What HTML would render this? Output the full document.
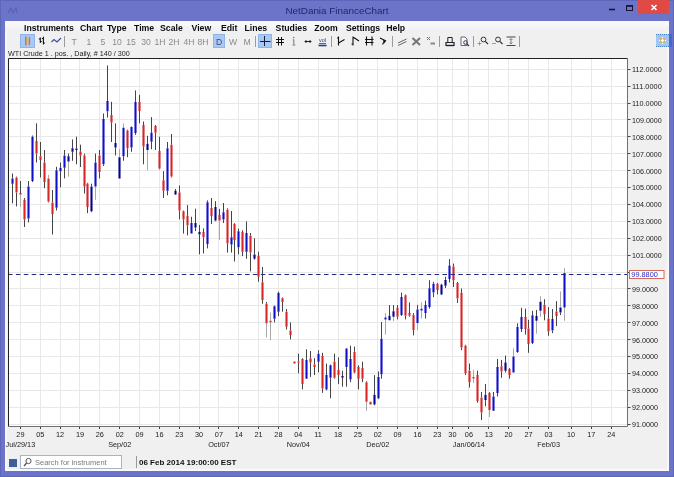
<!DOCTYPE html>
<html><head><meta charset="utf-8"><title>NetDania FinanceChart</title>
<style>
html,body{margin:0;padding:0}
body{width:674px;height:477px;position:relative;overflow:hidden;background:#6b74c8;font-family:"Liberation Sans",sans-serif;color:#111}
.abs{position:absolute}
#title,#menu,#lbl,#stxt,#time,.tb,svg{will-change:transform}
#content{left:5px;top:21px;width:664px;height:450px;background:#f0f0f0;box-sizing:border-box;border:2px solid #f9f9fc;border-top:none}
#title{left:0;top:4px;width:674px;text-align:center;font-size:9.9px;color:#20286e;line-height:14px}
#menu{left:24px;top:22.5px;height:11px;font-weight:bold;font-size:8.7px;line-height:11px;white-space:nowrap;color:#0a0a0a}
#menu span{position:absolute;top:0}
.tb{position:absolute;top:37px;font-size:8.6px;line-height:10px;color:#8a8a8a;width:16px;text-align:center}
.sep{position:absolute;top:36px;width:1px;height:11px;background:#9a9a9a}
.sel{position:absolute;top:34px;height:14px;background:#a9c9f4;border:1px solid #8fb4ea;box-sizing:border-box}
#lbl{left:8px;top:49px;font-size:7.2px;line-height:9px;white-space:nowrap;color:#222}
#search{left:20px;top:455px;width:102px;height:14px;box-sizing:border-box;border:1px solid #a8b4c8;background:#fff}
#stxt{left:35px;top:458px;font-size:7.5px;line-height:9px;color:#7a7a7a;white-space:nowrap}
#time{left:139px;top:458px;font-size:8px;font-weight:bold;line-height:9px;white-space:nowrap;color:#111}
</style></head><body>
<div class="abs" style="left:0;top:0;width:674px;height:477px;box-sizing:border-box;border:1px solid #5d66ba"></div>
<div class="abs" id="content"></div>
<div class="abs" style="left:5px;top:21px;width:664px;height:10px;background:linear-gradient(#fbfbfb,#f0f0f0)"></div>
<div class="abs" id="title">NetDania FinanceChart</div>
<!-- window buttons -->
<div class="abs" style="left:638px;top:0;width:31px;height:14px;background:#e04a44"></div>
<svg class="abs" style="left:0;top:0" width="674" height="21" viewBox="0 0 674 21">
<path d="M651.5 5l5 5M656.5 5l-5 5" stroke="#fff" stroke-width="1.6" fill="none"/>
<path d="M609 9.5h6" stroke="#15153a" stroke-width="1.6"/>
<rect x="626.5" y="5.5" width="6" height="5" fill="none" stroke="#15153a" stroke-width="1"/><path d="M626 6h7" stroke="#15153a" stroke-width="1.6"/>
<path d="M8 13l3-5l2 5l3-5l1 5" stroke="#5660b4" stroke-width="1.1" fill="none"/>
</svg>
<div class="abs" id="menu"><span style="left:0px;word-spacing:0px">Instruments</span><span style="left:56px;word-spacing:1.8px">Chart Type</span><span style="left:110px;word-spacing:3.5px">Time Scale</span><span style="left:167.5px;word-spacing:0px">View</span><span style="left:197px;word-spacing:0px">Edit</span><span style="left:220.5px;word-spacing:0px">Lines</span><span style="left:251.60000000000002px;word-spacing:0px">Studies</span><span style="left:290.2px;word-spacing:0px">Zoom</span><span style="left:321.9px;word-spacing:0px">Settings</span><span style="left:362.3px;word-spacing:0px">Help</span></div>
<div class="abs" style="left:656px;top:34px;width:12.5px;height:13px;background:#9fc6f5;box-sizing:border-box;border-top:1px dotted #4a86c4;border-bottom:1px dotted #4a86c4"></div><div class="abs" style="left:668.5px;top:34px;width:3.5px;height:13px;background:#4a66cc"></div>
<div class="sel" style="left:20px;width:15px"></div>
<div class="sel" style="left:213px;width:12px"></div>
<div class="sel" style="left:258px;width:14px"></div>
<div class="tb" style="left:66.4px;color:#8a8a8a">T</div>
<div class="tb" style="left:80.7px;color:#8a8a8a">1</div>
<div class="tb" style="left:94.6px;color:#8a8a8a">5</div>
<div class="tb" style="left:109.0px;color:#8a8a8a">10</div>
<div class="tb" style="left:123.0px;color:#8a8a8a">15</div>
<div class="tb" style="left:137.6px;color:#8a8a8a">30</div>
<div class="tb" style="left:152.0px;color:#8a8a8a">1H</div>
<div class="tb" style="left:166.0px;color:#8a8a8a">2H</div>
<div class="tb" style="left:180.5px;color:#8a8a8a">4H</div>
<div class="tb" style="left:195.0px;color:#8a8a8a">8H</div>
<div class="tb" style="left:211.0px;color:#3a4a7a">D</div>
<div class="tb" style="left:224.5px;color:#8a8a8a">W</div>
<div class="tb" style="left:238.5px;color:#8a8a8a">M</div>
<div class="sep" style="left:64.0px"></div>
<div class="sep" style="left:255.0px"></div>
<div class="sep" style="left:331.0px"></div>
<div class="sep" style="left:391.8px"></div>
<div class="sep" style="left:439.0px"></div>
<div class="sep" style="left:472.9px"></div>
<div class="sep" style="left:519.2px"></div>
<svg class="abs" style="left:0;top:32px" width="674" height="18" viewBox="0 32 674 18" fill="none"><path d="M25 37h1.6v8h-1.6zM28.6 37.8h1.6v6.8h-1.6z" fill="#e08a30"/><path d="M25.8 36v10M29.4 36.5v9" stroke="#b06020" stroke-width=".5"/><path d="M40.3 37.5v5.5M38.8 39h1.5M40.3 41.5h1.5M43.4 36.8v7.8M41.9 38.5h1.5M43.4 43h1.5" stroke="#111" stroke-width="1.1"/><path d="M51.5 42l2.5-2.5l3 2.5l4-4" stroke="#3450a0" stroke-width="1.1"/><path d="M264.5 36v10M260 41.5h10.5" stroke="#0f2040" stroke-width="1"/><path d="M278.5 37v8.5M281.5 37v8.5M276 39.5h8M276 42.5h8" stroke="#111" stroke-width="1"/><path d="M293.8 39.5v5M292.5 45h2.8M292.8 39.8h1" stroke="#777" stroke-width="1"/><circle cx="293.8" cy="37.5" r=".8" fill="#777"/><path d="M305 41.5h6M306.5 40l-1.5 1.5l1.5 1.5M309.5 40l1.5 1.5l-1.5 1.5" stroke="#222" stroke-width="1"/><path d="M318.5 45.5h8" stroke="#2a3a90" stroke-width="1.6"/><path d="M319 43.5h7" stroke="#5060b0" stroke-width="1"/><text x="322.5" y="41.5" font-size="5.5" font-family="Liberation Sans, sans-serif" fill="#2a3a90" text-anchor="middle">vol</text><path d="M338.5 36.5v9M338.5 43l6-3.5M337 38h1.5" stroke="#111" stroke-width="1.1"/><path d="M353 36.5v9M353 37l6 4M351.5 44h1.5" stroke="#111" stroke-width="1.1"/><path d="M366.5 36.5v9M372 36.5v9M365 39.5h8.5M365 42.5h8.5" stroke="#111" stroke-width="1.1"/><path d="M380 38l5 2.5l-2.5 4" stroke="#111" stroke-width="1.1"/><path d="M383 40l3.5 .5l-2.5 3z" fill="#111"/><path d="M398 43l8.5-4M398 45.5l8.5-4" stroke="#666" stroke-width="1"/><path d="M412.5 38l7.5 7M420 38l-7.5 7" stroke="#777" stroke-width="2"/><path d="M427 37l3 3M430 37l-3 3" stroke="#777" stroke-width="1"/><path d="M430.5 43.5h4.5" stroke="#888" stroke-width="2"/><path d="M446 42.5h8v3h-8z" stroke="#223" stroke-width="1.2"/><path d="M447.8 42v-4.5h4.4V42" stroke="#223" stroke-width="1"/><path d="M446 45.5h8" stroke="#223" stroke-width="1.4"/><path d="M461 37h4l2 2v6.5h-6z" stroke="#667" stroke-width="1" fill="#fafafa"/><circle cx="465.5" cy="42.5" r="1.8" stroke="#334" stroke-width="1"/><path d="M467 44l2 2" stroke="#334" stroke-width="1.1"/><circle cx="483.5" cy="39.5" r="2.4" stroke="#333" stroke-width="1"/><path d="M485.3 41.3l2.7 2.7" stroke="#333" stroke-width="1.2"/><path d="M477.5 43.5h4M479.5 41.5v4" stroke="#d07878" stroke-width=".9"/><circle cx="498" cy="39.5" r="2.4" stroke="#333" stroke-width="1"/><path d="M499.8 41.3l2.7 2.7" stroke="#333" stroke-width="1.2"/><path d="M492 43.5h4" stroke="#d07878" stroke-width=".9"/><path d="M506.5 37h9M506.5 45.5h9" stroke="#444" stroke-width="1.2"/><path d="M511 39v4.5M509.5 40l1.5-1.5l1.5 1.5M509.5 42.5l1.5 1.5l1.5-1.5" stroke="#666" stroke-width=".8"/><path d="M662.5 37v7M659 40.5h7" stroke="#fff" stroke-width="1.2"/><rect x="660.5" y="38.5" width="4" height="4" stroke="#c8b070" stroke-width=".8"/></svg>
<div class="abs" id="lbl">WTI Crude 1 . pos. , Daily, # 140 / 300</div>
<svg width="674" height="477" viewBox="0 0 674 477" style="position:absolute;left:0;top:0" font-family="Liberation Sans, sans-serif">
<rect x="8" y="58" width="619" height="368" fill="#ffffff"/>
<path d="M20.5 58V426M40.5 58V426M60.5 58V426M79.5 58V426M99.5 58V426M119.5 58V426M139.5 58V426M159.5 58V426M179.5 58V426M199.5 58V426M218.5 58V426M238.5 58V426M258.5 58V426M278.5 58V426M298.5 58V426M318.5 58V426M338.5 58V426M357.5 58V426M377.5 58V426M397.5 58V426M417.5 58V426M437.5 58V426M452.5 58V426M468.5 58V426M488.5 58V426M508.5 58V426M528.5 58V426M548.5 58V426M571.5 58V426M591.5 58V426M611.5 58V426M8 424.5H627M8 407.5H627M8 390.5H627M8 373.5H627M8 356.5H627M8 339.5H627M8 322.5H627M8 305.5H627M8 288.5H627M8 272.5H627M8 255.5H627M8 238.5H627M8 221.5H627M8 204.5H627M8 187.5H627M8 170.5H627M8 153.5H627M8 136.5H627M8 119.5H627M8 103.5H627M8 86.5H627M8 69.5H627" stroke="#e8e8e8" stroke-width="1" fill="none"/>
<path d="M12.50 173.5V178.4M12.50 183.7V203.3M16.50 176.6V177.5M16.50 192.6V206.4M20.50 181.0V193.0M24.50 198.0V199.8M24.50 219.4V227.0M28.50 181.0V186.4M28.50 218.5V222.4M32.50 135.5V136.7M32.50 181.0V182.0M36.50 123.3V141.1M36.50 153.6V162.5M40.50 142.0V156.3M40.50 159.9V177.5M44.50 150.0V162.5M44.50 182.0V188.2M48.50 201.5V202.4M52.50 190.0V202.4M52.50 214.0V234.5M56.50 166.8V170.3M56.50 207.8V210.5M60.50 162.5V167.7M60.50 171.2V187.3M64.50 150.0V155.4M64.50 167.7V178.4M68.50 153.6V156.3M72.50 139.4V148.3M72.50 151.8V160.8M76.50 136.7V148.5M76.50 150.0V164.3M80.50 144.7V151.8M80.50 155.4V167.0M84.50 153.6V155.4M84.50 186.4V193.5M87.50 182.8V183.7M87.50 206.9V213.1M91.50 183.7V186.4M91.50 211.3V212.2M95.50 153.6V162.5M99.50 150.0V155.4M99.50 172.1V178.4M103.50 113.5V118.9M103.50 164.3V166.0M107.50 65.4V101.0M107.50 111.3V117.5M111.50 101.8V115.0M111.50 122.4V142.0M115.50 123.3V142.9M115.50 147.4V155.4M119.50 178.4V178.4M123.50 156.3V160.8M127.50 129.6V130.5M127.50 148.3V157.2M131.50 126.4V126.9M131.50 147.4V151.8M135.50 90.4V102.0M135.50 133.1V134.9M139.50 94.8V102.0M139.50 110.9V123.3M143.50 121.5V125.1M143.50 146.5V164.3M147.50 135.8V143.8M151.50 117.1V132.8M151.50 141.7V149.2M155.50 125.1V126.0M155.50 132.8V150.0M159.50 136.7V151.0M159.50 168.6V169.5M163.50 171.2V180.2M163.50 190.8V198.0M167.50 142.0V148.3M167.50 190.8V195.3M171.50 134.0V144.7M171.50 176.6V177.5M175.50 189.0V190.8M175.50 194.4V195.0M179.50 185.5V192.6M179.50 210.5V219.4M183.50 210.5V211.3M183.50 219.4V233.6M187.50 205.1V215.8M187.50 225.6V235.4M191.50 216.7V222.9M191.50 233.6V233.6M195.50 208.7V222.9M195.50 227.4V231.0M199.50 225.0V232.0M199.50 234.6V254.4M203.50 228.4V232.0M203.50 237.3V253.5M207.50 200.4V202.2M207.50 244.0V248.4M211.50 198.0V207.9M211.50 215.9V224.0M215.50 201.2V207.0M215.50 220.4V221.3M219.50 208.8V215.0M223.50 203.0V212.3M223.50 219.5V223.0M227.50 208.3V209.7M227.50 243.5V252.6M231.50 211.0V237.3M231.50 244.4V252.6M234.50 223.2V224.0M234.50 240.0V261.5M238.50 228.5V231.2M238.50 247.2V254.4M242.50 230.3V232.1M242.50 251.7V256.1M246.50 221.4V233.0M246.50 251.7V258.8M250.50 233.0V235.7M250.50 252.6V271.4M254.50 238.3V254.4M254.50 258.8V259.7M258.50 251.7V256.1M258.50 276.7V281.7M262.50 267.0V282.2M262.50 300.1V303.7M266.50 301.9V303.7M274.50 305.5V306.3M274.50 318.8V322.4M278.50 291.7V293.0M278.50 311.7V316.1M282.50 297.4V298.3M282.50 301.9V311.7M286.50 309.0V311.7M286.50 326.8V329.5M290.50 322.4V330.4M290.50 334.9V339.4M294.50 361.4V361.4M294.50 363.5V363.5M298.50 353.7V361.5M298.50 362.8V373.3M302.50 358.2V359.0M302.50 384.0V389.4M306.50 349.3V360.0M306.50 378.7V378.7M310.50 351.0V358.2M310.50 362.6V376.9M314.50 358.2V364.4M314.50 367.1V375.1M318.50 350.2V353.7M318.50 361.7V372.4M322.50 352.8V356.0M322.50 388.5V392.9M326.50 363.5V375.1M326.50 389.4V390.3M330.50 364.5V365.3M330.50 377.8V398.3M334.50 353.7V361.7M334.50 377.8V378.7M338.50 357.3V369.8M338.50 375.1V384.0M342.50 370.7V376.0M342.50 377.8V386.7M346.50 348.0V348.4M346.50 367.1V386.7M350.50 345.7V359.0M350.50 379.6V382.2M354.50 346.6V351.9M354.50 372.4V373.3M358.50 365.3V367.1M358.50 378.7V389.4M362.50 361.7V368.0M362.50 378.7V382.2M366.50 381.3V382.2M370.50 401.8V401.8M370.50 404.5V404.5M374.50 375.1V394.7M374.50 404.5V405.4M378.50 371.5V376.9M378.50 398.3V399.2M381.50 322.0V338.8M381.50 374.2V378.7M389.50 305.1V315.8M389.50 320.3V320.3M393.50 305.1V311.3M397.50 305.1V307.8M397.50 316.7V319.4M401.50 292.6V297.1M401.50 314.9V315.8M405.50 294.4V295.3M405.50 315.8V319.4M409.50 302.4V313.1M409.50 315.8V316.7M413.50 313.1V314.9M413.50 330.1V335.4M417.50 305.1V309.6M425.50 300.7V305.1M425.50 313.1V318.5M429.50 280.2V288.2M429.50 306.9V308.7M433.50 281.9V283.7M433.50 292.6V297.1M437.50 282.8V283.7M437.50 290.0V294.4M441.50 283.7V284.8M441.50 294.6V295.0M445.50 276.8V279.9M445.50 285.7V288.0M449.50 259.1V265.6M449.50 279.0V282.5M453.50 263.6V266.5M453.50 280.3V287.0M457.50 282.0V283.0M457.50 298.6V303.0M461.50 288.5V292.8M461.50 347.5V350.2M465.50 344.8V345.7M465.50 373.3V375.1M469.50 363.5V370.7M469.50 382.2V387.6M477.50 370.7V375.1M477.50 401.0V402.7M481.50 392.0V397.4M481.50 412.5V420.0M485.50 384.0V394.7M485.50 400.1V406.3M489.50 392.0V392.9M493.50 392.0V396.5M493.50 410.8V411.0M497.50 359.0V367.1M497.50 392.9V396.5M501.50 360.0V366.2M501.50 371.5V377.8M505.50 355.5V362.6M505.50 370.7V372.4M509.50 368.0V368.9M509.50 375.1V378.7M513.50 372.4V372.4M517.50 323.3V326.9M517.50 351.9V352.8M521.50 307.8V317.0M521.50 329.0V332.0M525.50 308.6V317.0M525.50 329.0V334.6M528.50 319.8V328.5M528.50 343.9V352.8M532.50 310.8V315.2M532.50 343.0V344.0M536.50 310.0V316.0M544.50 299.2V304.8M544.50 314.2V320.3M548.50 307.0V318.5M548.50 331.5V335.8M552.50 309.0V319.0M552.50 330.6V333.2M556.50 301.1V311.6M556.50 316.0V326.0M560.50 312.5V315.0" stroke="#454545" stroke-width="1" fill="none"/>
<path d="M20.50 194.5V207.0M48.50 174.8V178.4M68.50 161.6V176.6M95.50 186.4V199.8M119.50 149.2V157.2M123.50 123.3V127.8M147.50 150.0V170.3M219.50 220.4V240.0M266.50 323.3V337.5M270.50 312.6V320.8M270.50 322.2V340.2M366.50 401.8V410.8M385.50 313.1V317.6M385.50 319.4V334.5M393.50 316.7V321.1M417.50 322.9V330.1M421.50 302.4V308.7M421.50 310.5V318.5M473.50 369.8V377.0M473.50 378.5V383.1M489.50 409.9V417.0M513.50 348.4V356.4M536.50 320.7V333.7M540.50 296.2V301.8M540.50 310.8V316.9M560.50 291.5V307.4M564.50 268.0V273.1M564.50 307.4V320.8" stroke="#a8a8a8" stroke-width="1" fill="none"/>
<path d="M15.45 177.5h2.1V192.6h-2.1zM19.45 193.0h2.1V194.5h-2.1zM23.45 199.8h2.1V219.4h-2.1zM35.45 141.1h2.1V153.6h-2.1zM39.45 156.3h2.1V159.9h-2.1zM43.45 162.5h2.1V182.0h-2.1zM47.45 178.4h2.1V201.5h-2.1zM51.45 202.4h2.1V214.0h-2.1zM79.45 151.8h2.1V155.4h-2.1zM83.45 155.4h2.1V186.4h-2.1zM86.45 183.7h2.1V206.9h-2.1zM98.45 155.4h2.1V172.1h-2.1zM110.45 115.0h2.1V122.4h-2.1zM126.45 130.5h2.1V148.3h-2.1zM138.45 102.0h2.1V110.9h-2.1zM142.45 125.1h2.1V146.5h-2.1zM154.45 126.0h2.1V132.8h-2.1zM158.45 151.0h2.1V168.6h-2.1zM162.45 180.2h2.1V190.8h-2.1zM170.45 144.7h2.1V176.6h-2.1zM178.45 192.6h2.1V210.5h-2.1zM182.45 211.3h2.1V219.4h-2.1zM186.45 215.8h2.1V225.6h-2.1zM202.45 232.0h2.1V237.3h-2.1zM210.45 207.9h2.1V215.9h-2.1zM218.45 215.0h2.1V220.4h-2.1zM226.45 209.7h2.1V243.5h-2.1zM233.45 224.0h2.1V240.0h-2.1zM241.45 232.1h2.1V251.7h-2.1zM249.45 235.7h2.1V252.6h-2.1zM257.45 256.1h2.1V276.7h-2.1zM261.45 282.2h2.1V300.1h-2.1zM265.45 303.7h2.1V323.3h-2.1zM269.45 320.8h2.1V322.2h-2.1zM281.45 298.3h2.1V301.9h-2.1zM285.45 311.7h2.1V326.8h-2.1zM289.45 330.4h2.1V334.9h-2.1zM293.45 361.4h2.1V363.5h-2.1zM297.45 361.5h2.1V362.8h-2.1zM301.45 359.0h2.1V384.0h-2.1zM309.45 358.2h2.1V362.6h-2.1zM313.45 364.4h2.1V367.1h-2.1zM321.45 356.0h2.1V388.5h-2.1zM333.45 361.7h2.1V377.8h-2.1zM337.45 369.8h2.1V375.1h-2.1zM353.45 351.9h2.1V372.4h-2.1zM357.45 367.1h2.1V378.7h-2.1zM361.45 368.0h2.1V378.7h-2.1zM365.45 382.2h2.1V401.8h-2.1zM369.45 401.8h2.1V404.5h-2.1zM396.45 307.8h2.1V316.7h-2.1zM404.45 295.3h2.1V315.8h-2.1zM408.45 313.1h2.1V315.8h-2.1zM412.45 314.9h2.1V330.1h-2.1zM436.45 283.7h2.1V290.0h-2.1zM452.45 266.5h2.1V280.3h-2.1zM456.45 283.0h2.1V298.6h-2.1zM460.45 292.8h2.1V347.5h-2.1zM464.45 345.7h2.1V373.3h-2.1zM468.45 370.7h2.1V382.2h-2.1zM472.45 377.0h2.1V378.5h-2.1zM476.45 375.1h2.1V401.0h-2.1zM480.45 397.4h2.1V412.5h-2.1zM488.45 392.9h2.1V409.9h-2.1zM500.45 366.2h2.1V371.5h-2.1zM508.45 368.9h2.1V375.1h-2.1zM524.45 317.0h2.1V329.0h-2.1zM527.45 328.5h2.1V343.9h-2.1zM543.45 304.8h2.1V314.2h-2.1zM547.45 318.5h2.1V331.5h-2.1zM555.45 311.6h2.1V316.0h-2.1z" fill="#d62626"/>
<path d="M11.45 178.4h2.1V183.7h-2.1zM27.45 186.4h2.1V218.5h-2.1zM31.45 136.7h2.1V181.0h-2.1zM55.45 170.3h2.1V207.8h-2.1zM59.45 167.7h2.1V171.2h-2.1zM63.45 155.4h2.1V167.7h-2.1zM94.45 162.5h2.1V186.4h-2.1zM102.45 118.9h2.1V164.3h-2.1zM106.45 101.0h2.1V111.3h-2.1zM122.45 127.8h2.1V156.3h-2.1zM130.45 126.9h2.1V147.4h-2.1zM134.45 102.0h2.1V133.1h-2.1zM150.45 132.8h2.1V141.7h-2.1zM166.45 148.3h2.1V190.8h-2.1zM190.45 222.9h2.1V233.6h-2.1zM206.45 202.2h2.1V244.0h-2.1zM222.45 212.3h2.1V219.5h-2.1zM230.45 237.3h2.1V244.4h-2.1zM237.45 231.2h2.1V247.2h-2.1zM245.45 233.0h2.1V251.7h-2.1zM273.45 306.3h2.1V318.8h-2.1zM277.45 293.0h2.1V311.7h-2.1zM305.45 360.0h2.1V378.7h-2.1zM317.45 353.7h2.1V361.7h-2.1zM325.45 375.1h2.1V389.4h-2.1zM329.45 365.3h2.1V377.8h-2.1zM345.45 348.4h2.1V367.1h-2.1zM349.45 359.0h2.1V379.6h-2.1zM377.45 376.9h2.1V398.3h-2.1zM380.45 338.8h2.1V374.2h-2.1zM384.45 317.6h2.1V319.4h-2.1zM400.45 297.1h2.1V314.9h-2.1zM416.45 309.6h2.1V322.9h-2.1zM420.45 308.7h2.1V310.5h-2.1zM424.45 305.1h2.1V313.1h-2.1zM428.45 288.2h2.1V306.9h-2.1zM432.45 283.7h2.1V292.6h-2.1zM448.45 265.6h2.1V279.0h-2.1zM492.45 396.5h2.1V410.8h-2.1zM496.45 367.1h2.1V392.9h-2.1zM512.45 356.4h2.1V372.4h-2.1zM516.45 326.9h2.1V351.9h-2.1zM520.45 317.0h2.1V329.0h-2.1zM531.45 315.2h2.1V343.0h-2.1zM551.45 319.0h2.1V330.6h-2.1zM563.45 273.1h2.1V307.4h-2.1z" fill="#1010c8"/>
<path d="M67.45 156.3h2.1V161.6h-2.1zM71.45 148.3h2.1V151.8h-2.1zM75.45 148.5h2.1V150.0h-2.1zM90.45 186.4h2.1V211.3h-2.1zM114.45 142.9h2.1V147.4h-2.1zM118.45 157.2h2.1V178.4h-2.1zM146.45 143.8h2.1V150.0h-2.1zM174.45 190.8h2.1V194.4h-2.1zM194.45 222.9h2.1V227.4h-2.1zM198.45 232.0h2.1V234.6h-2.1zM214.45 207.0h2.1V220.4h-2.1zM253.45 254.4h2.1V258.8h-2.1zM341.45 376.0h2.1V377.8h-2.1zM373.45 394.7h2.1V404.5h-2.1zM388.45 315.8h2.1V320.3h-2.1zM392.45 311.3h2.1V316.7h-2.1zM440.45 284.8h2.1V294.6h-2.1zM444.45 279.9h2.1V285.7h-2.1zM484.45 394.7h2.1V400.1h-2.1zM504.45 362.6h2.1V370.7h-2.1zM535.45 316.0h2.1V320.7h-2.1zM539.45 301.8h2.1V310.8h-2.1zM559.45 307.4h2.1V312.5h-2.1z" fill="#05058c"/>
<path d="M8 274.5H627" stroke="#262684" stroke-width="1" stroke-dasharray="4.5 3.4" fill="none"/>
<path d="M8.5 426V58.5H627" stroke="#222" stroke-width="1" fill="none"/>
<path d="M8 426.5H627.5V58" stroke="#707070" stroke-width="1" fill="none"/>
<path d="M20.5 427v2M40.5 427v2M60.5 427v2M79.5 427v2M99.5 427v2M119.5 427v2M139.5 427v2M159.5 427v2M179.5 427v2M199.5 427v2M218.5 427v2M238.5 427v2M258.5 427v2M278.5 427v2M298.5 427v2M318.5 427v2M338.5 427v2M357.5 427v2M377.5 427v2M397.5 427v2M417.5 427v2M437.5 427v2M452.5 427v2M468.5 427v2M488.5 427v2M508.5 427v2M528.5 427v2M548.5 427v2M571.5 427v2M591.5 427v2M611.5 427v2M628 424.5h2.5M628 407.5h2.5M628 390.5h2.5M628 373.5h2.5M628 356.5h2.5M628 339.5h2.5M628 322.5h2.5M628 305.5h2.5M628 288.5h2.5M628 272.5h2.5M628 255.5h2.5M628 238.5h2.5M628 221.5h2.5M628 204.5h2.5M628 187.5h2.5M628 170.5h2.5M628 153.5h2.5M628 136.5h2.5M628 119.5h2.5M628 103.5h2.5M628 86.5h2.5M628 69.5h2.5" stroke="#444" stroke-width="1" fill="none"/>
<text x="632" y="427.0" font-size="7.7" textLength="25.9" lengthAdjust="spacingAndGlyphs" fill="#222">91.0000</text>
<text x="632" y="410.1" font-size="7.7" textLength="25.9" lengthAdjust="spacingAndGlyphs" fill="#222">92.0000</text>
<text x="632" y="393.2" font-size="7.7" textLength="25.9" lengthAdjust="spacingAndGlyphs" fill="#222">93.0000</text>
<text x="632" y="376.3" font-size="7.7" textLength="25.9" lengthAdjust="spacingAndGlyphs" fill="#222">94.0000</text>
<text x="632" y="359.4" font-size="7.7" textLength="25.9" lengthAdjust="spacingAndGlyphs" fill="#222">95.0000</text>
<text x="632" y="342.5" font-size="7.7" textLength="25.9" lengthAdjust="spacingAndGlyphs" fill="#222">96.0000</text>
<text x="632" y="325.6" font-size="7.7" textLength="25.9" lengthAdjust="spacingAndGlyphs" fill="#222">97.0000</text>
<text x="632" y="308.7" font-size="7.7" textLength="25.9" lengthAdjust="spacingAndGlyphs" fill="#222">98.0000</text>
<text x="632" y="291.8" font-size="7.7" textLength="25.9" lengthAdjust="spacingAndGlyphs" fill="#222">99.0000</text>
<text x="632" y="258.0" font-size="7.7" textLength="29.8" lengthAdjust="spacingAndGlyphs" fill="#222">101.0000</text>
<text x="632" y="241.1" font-size="7.7" textLength="29.8" lengthAdjust="spacingAndGlyphs" fill="#222">102.0000</text>
<text x="632" y="224.2" font-size="7.7" textLength="29.8" lengthAdjust="spacingAndGlyphs" fill="#222">103.0000</text>
<text x="632" y="207.3" font-size="7.7" textLength="29.8" lengthAdjust="spacingAndGlyphs" fill="#222">104.0000</text>
<text x="632" y="190.4" font-size="7.7" textLength="29.8" lengthAdjust="spacingAndGlyphs" fill="#222">105.0000</text>
<text x="632" y="173.5" font-size="7.7" textLength="29.8" lengthAdjust="spacingAndGlyphs" fill="#222">106.0000</text>
<text x="632" y="156.6" font-size="7.7" textLength="29.8" lengthAdjust="spacingAndGlyphs" fill="#222">107.0000</text>
<text x="632" y="139.7" font-size="7.7" textLength="29.8" lengthAdjust="spacingAndGlyphs" fill="#222">108.0000</text>
<text x="632" y="122.8" font-size="7.7" textLength="29.8" lengthAdjust="spacingAndGlyphs" fill="#222">109.0000</text>
<text x="632" y="105.9" font-size="7.7" textLength="29.8" lengthAdjust="spacingAndGlyphs" fill="#222">110.0000</text>
<text x="632" y="89.0" font-size="7.7" textLength="29.8" lengthAdjust="spacingAndGlyphs" fill="#222">111.0000</text>
<text x="632" y="72.1" font-size="7.7" textLength="29.8" lengthAdjust="spacingAndGlyphs" fill="#222">112.0000</text>
<rect x="629.5" y="270.5" width="34.5" height="8" fill="#fff" stroke="#d46a5a" stroke-width="1"/>
<text x="631.3" y="277.2" font-size="6.9" textLength="26.6" lengthAdjust="spacingAndGlyphs" fill="#2a2ac0">99.8800</text>
<text x="20.4" y="436.6" font-size="7.3" fill="#222" text-anchor="middle">29</text>
<text x="20.4" y="446.6" font-size="7.3" fill="#222" text-anchor="middle">Jul/29/13</text>
<text x="40.2" y="436.6" font-size="7.3" fill="#222" text-anchor="middle">05</text>
<text x="60.1" y="436.6" font-size="7.3" fill="#222" text-anchor="middle">12</text>
<text x="80.0" y="436.6" font-size="7.3" fill="#222" text-anchor="middle">19</text>
<text x="99.8" y="436.6" font-size="7.3" fill="#222" text-anchor="middle">26</text>
<text x="119.7" y="436.6" font-size="7.3" fill="#222" text-anchor="middle">02</text>
<text x="119.7" y="446.6" font-size="7.3" fill="#222" text-anchor="middle">Sep/02</text>
<text x="139.5" y="436.6" font-size="7.3" fill="#222" text-anchor="middle">09</text>
<text x="159.4" y="436.6" font-size="7.3" fill="#222" text-anchor="middle">16</text>
<text x="179.2" y="436.6" font-size="7.3" fill="#222" text-anchor="middle">23</text>
<text x="199.1" y="436.6" font-size="7.3" fill="#222" text-anchor="middle">30</text>
<text x="218.9" y="436.6" font-size="7.3" fill="#222" text-anchor="middle">07</text>
<text x="218.9" y="446.6" font-size="7.3" fill="#222" text-anchor="middle">Oct/07</text>
<text x="238.8" y="436.6" font-size="7.3" fill="#222" text-anchor="middle">14</text>
<text x="258.6" y="436.6" font-size="7.3" fill="#222" text-anchor="middle">21</text>
<text x="278.4" y="436.6" font-size="7.3" fill="#222" text-anchor="middle">28</text>
<text x="298.3" y="436.6" font-size="7.3" fill="#222" text-anchor="middle">04</text>
<text x="298.3" y="446.6" font-size="7.3" fill="#222" text-anchor="middle">Nov/04</text>
<text x="318.1" y="436.6" font-size="7.3" fill="#222" text-anchor="middle">11</text>
<text x="338.0" y="436.6" font-size="7.3" fill="#222" text-anchor="middle">18</text>
<text x="357.9" y="436.6" font-size="7.3" fill="#222" text-anchor="middle">25</text>
<text x="377.7" y="436.6" font-size="7.3" fill="#222" text-anchor="middle">02</text>
<text x="377.7" y="446.6" font-size="7.3" fill="#222" text-anchor="middle">Dec/02</text>
<text x="397.6" y="436.6" font-size="7.3" fill="#222" text-anchor="middle">09</text>
<text x="417.4" y="436.6" font-size="7.3" fill="#222" text-anchor="middle">16</text>
<text x="437.2" y="436.6" font-size="7.3" fill="#222" text-anchor="middle">23</text>
<text x="452.4" y="436.6" font-size="7.3" fill="#222" text-anchor="middle">30</text>
<text x="468.9" y="436.6" font-size="7.3" fill="#222" text-anchor="middle">06</text>
<text x="468.9" y="446.6" font-size="7.3" fill="#222" text-anchor="middle">Jan/06/14</text>
<text x="488.7" y="436.6" font-size="7.3" fill="#222" text-anchor="middle">13</text>
<text x="508.6" y="436.6" font-size="7.3" fill="#222" text-anchor="middle">20</text>
<text x="528.5" y="436.6" font-size="7.3" fill="#222" text-anchor="middle">27</text>
<text x="548.6" y="436.6" font-size="7.3" fill="#222" text-anchor="middle">03</text>
<text x="548.6" y="446.6" font-size="7.3" fill="#222" text-anchor="middle">Feb/03</text>
<text x="571.0" y="436.6" font-size="7.3" fill="#222" text-anchor="middle">10</text>
<text x="591.2" y="436.6" font-size="7.3" fill="#222" text-anchor="middle">17</text>
<text x="611.3" y="436.6" font-size="7.3" fill="#222" text-anchor="middle">24</text>
</svg>
<div class="abs" style="left:9px;top:459px;width:7.5px;height:7.5px;background:#3d5f9c"></div>
<div class="abs" id="search"></div>
<svg class="abs" style="left:22px;top:457px" width="12" height="11" viewBox="0 0 12 11"><circle cx="6.5" cy="4" r="2.6" fill="none" stroke="#555" stroke-width="1"/><path d="M4.6 6L2 9" stroke="#555" stroke-width="1.3"/></svg>
<div class="abs" id="stxt">Search for instrument</div>
<div class="abs" style="left:135.5px;top:456px;width:1px;height:12px;background:#999"></div>
<div class="abs" id="time">06 Feb 2014 19:00:00 EST</div>
</body></html>
